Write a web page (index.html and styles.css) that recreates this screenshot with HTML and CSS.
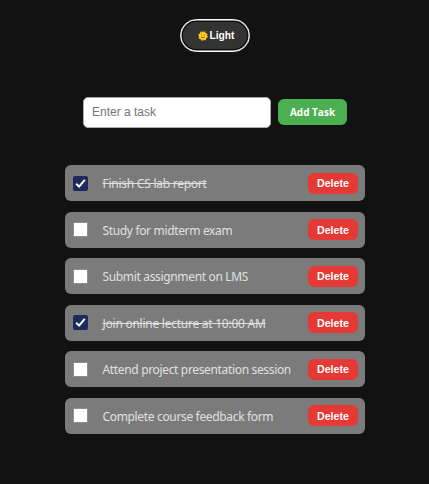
FILE: index.html
```html
<!DOCTYPE html>
<html lang="en">
<head>
<meta charset="utf-8">
<title>Tasks</title>
<link rel="stylesheet" href="styles.css">
</head>
<body>
<button class="theme" type="button">
<svg class="sun" viewBox="0 0 10 10" aria-hidden="true"><circle cx="5" cy="5" r="4.2" fill="#f9b516" stroke="#f9b516" stroke-width="1.2" stroke-dasharray="1.7 1.6"/><circle cx="5" cy="5" r="3.5" fill="#ffd51f"/><path d="M3.7 3.5v1M6.3 3.5v1M3.2 6q1.8 1.5 3.6 0" fill="none" stroke="#574019" stroke-width=".8"/></svg>
<span class="theme-label">Light</span>
</button>
<form class="entry">
<input class="field" type="text" placeholder="Enter a task">
<button class="add" type="button"><span>Add Task</span></button>
</form>
<ul class="tasks">
<li class="task done"><span class="box"><svg viewBox="0 0 15 15"><path d="M3.2 7.7l2.9 2.9 5.7-6.7"/></svg></span><span class="name">Finish CS lab report</span><button class="delete" type="button">Delete</button></li>
<li class="task"><span class="box"></span><span class="name">Study for midterm exam</span><button class="delete" type="button">Delete</button></li>
<li class="task"><span class="box"></span><span class="name">Submit assignment on LMS</span><button class="delete" type="button">Delete</button></li>
<li class="task done"><span class="box"><svg viewBox="0 0 15 15"><path d="M3.2 7.7l2.9 2.9 5.7-6.7"/></svg></span><span class="name">Join online lecture at 10:00 AM</span><button class="delete" type="button">Delete</button></li>
<li class="task"><span class="box"></span><span class="name">Attend project presentation session</span><button class="delete" type="button">Delete</button></li>
<li class="task"><span class="box"></span><span class="name">Complete course feedback form</span><button class="delete" type="button">Delete</button></li>
</ul>
</body>
</html>
```
FILE: styles.css
```css
* { box-sizing: border-box; }
body {
  margin: 0;
  height: 484px;
  overflow: hidden;
  padding-top: 19px;
  background: #121212;
  color: #e0e0e0;
  font-family: "Noto Sans", sans-serif;
  display: flex;
  flex-direction: column;
  align-items: center;
}
button { border: 0; padding: 0; font-family: inherit; color: #fff; }
.theme {
  width: 70px;
  height: 33px;
  margin-left: 1px;
  border: 1px solid #fff;
  border-radius: 16.5px;
  background: #333;
  box-shadow: inset 0 0 0 .5px #fff, inset 0 0 0 2px #101010;
  display: flex;
  align-items: center;
  justify-content: center;
  gap: 2px;
  padding-left: 2px;
  font: bold 10.2px "Liberation Sans", sans-serif;
}
.sun { width: 10px; height: 10px; }
.entry {
  margin: 45px 0 0 1px;
  display: flex;
  align-items: center;
  gap: 7px;
}
.field {
  width: 188px;
  height: 31px;
  border: 1px solid #aaa;
  border-radius: 5px;
  padding: 0 8px 2px;
  background: #fff;
  font: 12px "Liberation Sans", sans-serif;
}
.field::placeholder { color: #757575; opacity: 1; }
.add {
  width: 69px;
  height: 26px;
  margin-bottom: 1px;
  border-radius: 6px;
  background: #4caf50;
  font: bold 10px "Open Sans", sans-serif;
}
.tasks {
  list-style: none;
  margin: 37px 0 0 1px;
  padding: 0;
  width: 300px;
  display: flex;
  flex-direction: column;
  gap: 10.6px;
}
.task {
  height: 36px;
  padding: 0 7px 0 8px;
  border-radius: 6px;
  background: #7b7b7b;
  display: flex;
  align-items: center;
}
.box {
  width: 15px;
  height: 15px;
  border: 1px solid #8f8f8f;
  background: #fff;
  flex: none;
}
.done .box { border: 0; border-radius: 2px; background: #1e2a5a; }
.box svg { display: block; width: 15px; height: 15px; }
.box path { fill: none; stroke: #fff; stroke-width: 2; }
.name {
  flex: 1;
  margin-left: 14.5px;
  padding-top: 1px;
  font-size: 12px;
  letter-spacing: -.34px;
  line-height: 17px;
  white-space: nowrap;
}
.done .name { letter-spacing: -.25px; text-decoration: line-through; }
.delete {
  width: 50px;
  height: 21px;
  border-radius: 6px;
  background: #e53935;
  font: bold 10.67px "Liberation Sans", sans-serif;
}
```
